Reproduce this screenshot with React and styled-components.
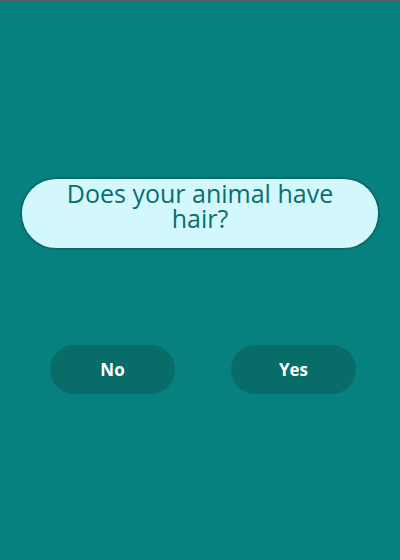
import styled, { createGlobalStyle } from "styled-components";

const GlobalStyle = createGlobalStyle`
  html, body {
    margin: 0;
    padding: 0;
    background: #078080;
  }
  body {
    font-family: "Trebuchet MS", "Open Sans", "DejaVu Sans", sans-serif;
  }
`;

const Page = styled.main`
  min-height: 560px;
  box-sizing: border-box;
  border-top: 1px solid #4f5d6a;
  background: #078080;
  padding-top: 176px;
  display: flex;
  flex-direction: column;
`;

const Question = styled.div`
  margin: 0 20px;
  box-sizing: border-box;
  height: 73px;
  padding: 2px 44px 0;
  display: flex;
  align-items: flex-start;
  justify-content: center;
  text-align: center;
  background: #d2f8fe;
  border: 2px solid #0b6a6a;
  border-radius: 40px;
  color: #0b6e6e;
  font-size: 25px;
  line-height: 25px;
`;

const Answers = styled.div`
  display: flex;
  gap: 56px;
  padding-left: 50px;
  margin-top: 95px;
`;

const Button = styled.button`
  width: 125px;
  height: 49px;
  border: none;
  border-radius: 25px;
  background: #086c69;
  color: #fffffe;
  font-family: inherit;
  font-size: 17px;
  font-weight: 700;
  cursor: pointer;
`;

const App = () => {
  const answers = ["No", "Yes"];

  return (
    <Page>
      <GlobalStyle />
      <Question>Does your animal have hair?</Question>
      <Answers>
        {answers.map((a) => (
          <Button key={a}>{a}</Button>
        ))}
      </Answers>
    </Page>
  );
};

export default App;
